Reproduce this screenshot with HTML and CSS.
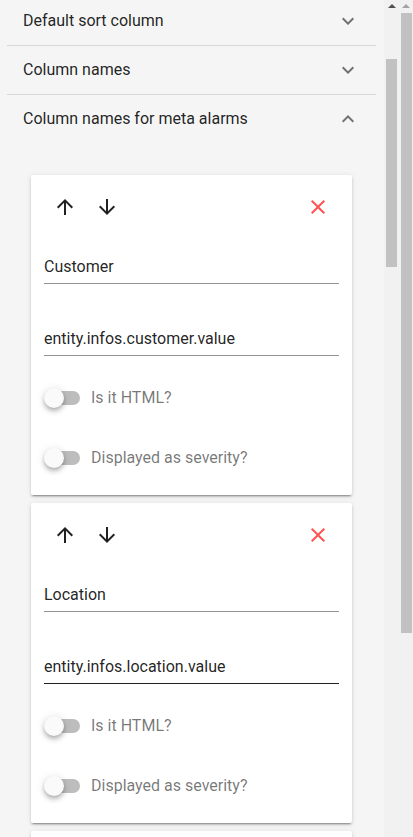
FILE: index.html
```html
<!DOCTYPE html>
<html>
<head>
<meta charset="utf-8">
<link rel="stylesheet" href="styles.css">
</head>
<body>
<div class="app">
  <div class="main">
    <div class="panels">
      <div class="panel">
        <div class="header"><span>Default sort column</span>
          <svg class="chev" viewBox="0 0 24 24"><path d="M16.59 8.59L12 13.17 7.41 8.59 6 10l6 6 6-6z"/></svg>
        </div>
      </div>
      <div class="panel">
        <div class="header"><span>Column names</span>
          <svg class="chev" viewBox="0 0 24 24"><path d="M16.59 8.59L12 13.17 7.41 8.59 6 10l6 6 6-6z"/></svg>
        </div>
      </div>
      <div class="panel">
        <div class="header"><span>Column names for meta alarms</span>
          <svg class="chev" viewBox="0 0 24 24"><path d="M7.41 15.41L12 10.83l4.59 4.58L18 14l-6-6-6 6z"/></svg>
        </div>
        <div class="content">
          <div class="card">
            <div class="actions">
              <span class="icon-btn"><svg viewBox="0 0 24 24"><path d="M4 12l1.41 1.41L11 7.83V20h2V7.83l5.58 5.59L20 12l-8-8-8 8z"/></svg></span>
              <span class="icon-btn"><svg viewBox="0 0 24 24"><path d="M20 12l-1.41-1.41L13 16.17V4h-2v12.17l-5.58-5.59L4 12l8 8 8-8z"/></svg></span>
              <span class="spacer"></span>
              <span class="icon-btn del"><svg viewBox="0 0 24 24"><path d="M19 6.41L17.59 5 12 10.59 6.41 5 5 6.41 10.59 12 5 17.59 6.41 19 12 13.41 17.59 19 19 17.59 13.41 12z"/></svg></span>
            </div>
            <div class="field first"><div class="input">Customer</div></div>
            <div class="field second"><div class="input">entity.infos.customer.value</div></div>
            <div class="switch-row first"><span class="switch"><span class="track"></span><span class="knob"></span></span><span class="label">Is it HTML?</span></div>
            <div class="switch-row second"><span class="switch"><span class="track"></span><span class="knob"></span></span><span class="label">Displayed as severity?</span></div>
          </div>
          <div class="card">
            <div class="actions">
              <span class="icon-btn"><svg viewBox="0 0 24 24"><path d="M4 12l1.41 1.41L11 7.83V20h2V7.83l5.58 5.59L20 12l-8-8-8 8z"/></svg></span>
              <span class="icon-btn"><svg viewBox="0 0 24 24"><path d="M20 12l-1.41-1.41L13 16.17V4h-2v12.17l-5.58-5.59L4 12l8 8 8-8z"/></svg></span>
              <span class="spacer"></span>
              <span class="icon-btn del"><svg viewBox="0 0 24 24"><path d="M19 6.41L17.59 5 12 10.59 6.41 5 5 6.41 10.59 12 5 17.59 6.41 19 12 13.41 17.59 19 19 17.59 13.41 12z"/></svg></span>
            </div>
            <div class="field first"><div class="input">Location</div></div>
            <div class="field second hover"><div class="input">entity.infos.location.value</div></div>
            <div class="switch-row first"><span class="switch"><span class="track"></span><span class="knob"></span></span><span class="label">Is it HTML?</span></div>
            <div class="switch-row second"><span class="switch"><span class="track"></span><span class="knob"></span></span><span class="label">Displayed as severity?</span></div>
          </div>
          <div class="card">
            <div class="actions">
              <span class="icon-btn"><svg viewBox="0 0 24 24"><path d="M4 12l1.41 1.41L11 7.83V20h2V7.83l5.58 5.59L20 12l-8-8-8 8z"/></svg></span>
            </div>
          </div>
        </div>
      </div>
    </div>
  </div>
  <div class="vscroll inner">
    <div class="arrow dark"></div>
    <div class="thumb"></div>
  </div>
  <div class="vscroll outer">
    <div class="arrow light"></div>
    <div class="thumb"></div>
  </div>
</div>
</body>
</html>
```
FILE: styles.css
```css
html, body {
  margin: 0;
  padding: 0;
  height: 100%;
  overflow: hidden;
}
body {
  font-family: Roboto, "Liberation Sans", sans-serif;
  font-size: 16px;
  color: rgba(0,0,0,0.87);
}
.app {
  display: flex;
  height: 837px;
  width: 413px;
  overflow: hidden;
}
.main {
  width: 384px;
  flex: none;
  background: #f5f5f5;
  overflow: hidden;
}
.panels {
  margin: -3px 0 0 7px;
  width: 369px;
}
.panel + .panel {
  border-top: 1px solid rgba(0,0,0,0.12);
}
.header {
  height: 48px;
  display: flex;
  align-items: center;
  justify-content: space-between;
  padding: 0 16px;
  line-height: 20px;
}
.chev {
  width: 24px;
  height: 24px;
  fill: rgba(0,0,0,0.54);
}
.content {
  padding: 32px 24px 0;
}
.card {
  background: #fff;
  border-radius: 2px;
  box-shadow: 0 3px 1px -2px rgba(0,0,0,.2), 0 2px 2px 0 rgba(0,0,0,.14), 0 1px 5px 0 rgba(0,0,0,.12);
  height: 320px;
  box-sizing: border-box;
  padding-top: 14px;
  margin-bottom: 8px;
}
.actions {
  display: flex;
  align-items: center;
  padding: 0 16px;
  gap: 6px;
  height: 36px;
}
.spacer { flex: 1; }
.icon-btn {
  width: 36px;
  height: 36px;
  display: flex;
  align-items: center;
  justify-content: center;
}
.icon-btn svg {
  width: 24px;
  height: 24px;
  fill: rgba(0,0,0,0.87);
}
.icon-btn.del svg { fill: #ff5252; }
.field {
  margin: 0 13px;
  border-bottom: 1px solid rgba(0,0,0,0.42);
  padding-bottom: 6px;
}
.field.hover { border-bottom-color: rgba(0,0,0,0.87); }
.field.first { margin-top: 32px; }
.field.second { margin-top: 45px; }
.input {
  line-height: 20px;
  height: 20px;
}
.switch-row {
  display: flex;
  align-items: center;
  height: 20px;
  margin-left: 13px;
}
.switch-row.first { margin-top: 32px; }
.switch-row.second { margin-top: 40px; }
.switch {
  position: relative;
  width: 36px;
  height: 20px;
  flex: none;
}
.track {
  position: absolute;
  left: 2px;
  top: 3px;
  width: 34px;
  height: 14px;
  border-radius: 7px;
  background: #bdbdbd;
}
.knob {
  position: absolute;
  left: 0;
  top: 0;
  width: 20px;
  height: 20px;
  border-radius: 50%;
  background: #fafafa;
  box-shadow: 0 2px 4px -1px rgba(0,0,0,.2), 0 4px 5px 0 rgba(0,0,0,.14), 0 1px 10px 0 rgba(0,0,0,.12);
}
.label {
  margin-left: 11px;
  color: rgba(0,0,0,0.54);
  line-height: 20px;
}
.vscroll {
  background: #f1f1f1;
  flex: none;
  height: 837px;
}
.vscroll.inner { width: 16px; }
.vscroll.outer { width: 13px; }
.arrow {
  width: 0;
  height: 0;
  border-left: 4px solid transparent;
  border-right: 4px solid transparent;
  border-bottom: 4px solid #505050;
  margin-top: 4px;
}
.inner .arrow { margin-left: 4px; }
.outer .arrow { margin-left: 2px; border-bottom-color: #a3a3a3; }
.thumb { background: #c1c1c1; }
.inner .thumb {
  margin: 51px 0 0 2px;
  width: 11px;
  height: 208px;
}
.outer .thumb {
  margin: 5px 0 0 1px;
  width: 11px;
  height: 620px;
}
```
